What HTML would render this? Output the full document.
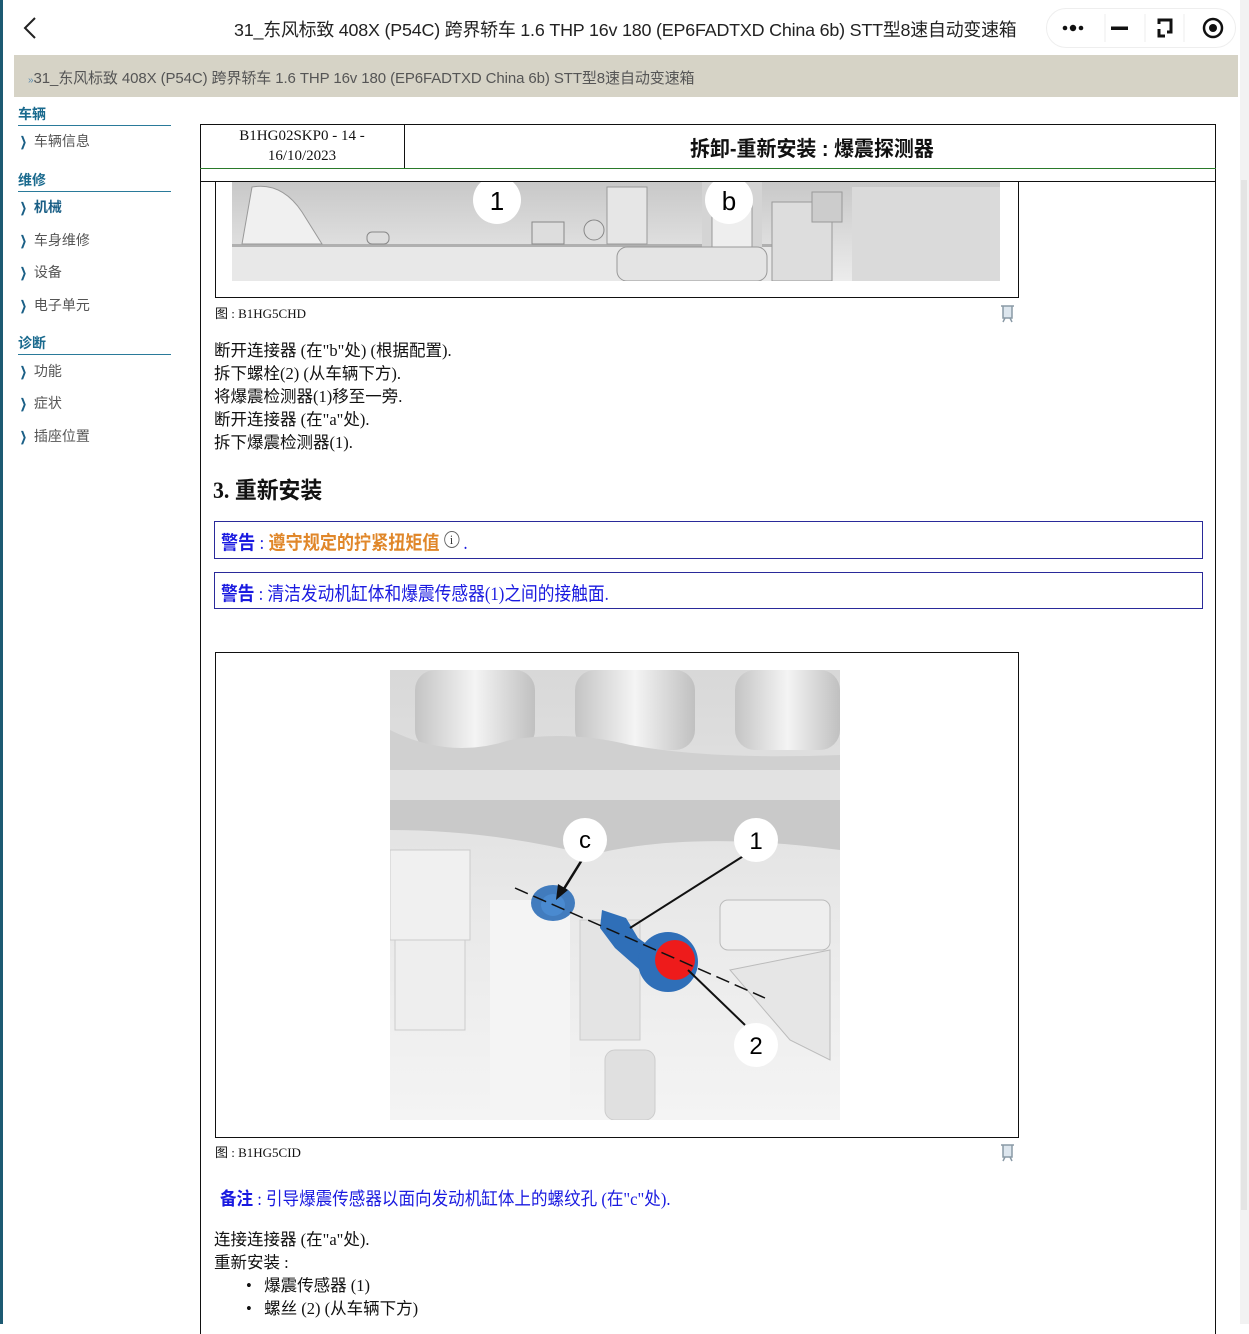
<!DOCTYPE html>
<html><head><meta charset="utf-8">
<style>
*{margin:0;padding:0;box-sizing:border-box}
body{width:1249px;height:1324px;overflow:hidden;background:#fff;position:relative;font-family:"Liberation Serif","Noto Sans CJK SC",serif;color:#111}
.a{position:absolute}
.c{position:absolute;white-space:nowrap;transform-origin:left top}
.s{font-family:"Liberation Sans","Noto Sans CJK SC",sans-serif}
.side div{position:absolute;left:18px;font-family:"Liberation Sans","Noto Sans CJK SC",sans-serif;white-space:nowrap}
.h{color:#1a6a8e;font-weight:bold;font-size:14px;width:153px;border-bottom:1.5px solid #2a7a9a;padding-bottom:1px}
.it{font-size:14px;color:#555}
.it b{color:#1a5f86;font-size:13px;margin-right:5px;display:inline-block;transform:scaleX(.6)}
.txt{font-size:16.5px;line-height:23px}
</style></head><body>
<div class="a" style="left:0;top:0;width:3px;height:1324px;background:#1d5a72"></div>
<div class="a" style="left:1240px;top:0;width:9px;height:1324px;background:#f2f2f2"></div>
<div class="a" style="left:1241px;top:180px;width:6px;height:1030px;background:#e4e4e4"></div>
<svg class="a" style="left:20px;top:16px" width="20" height="24"><path d="M15 2 L5 12 L15 22" stroke="#222" stroke-width="2" fill="none"/></svg>
<div class="a s" style="left:234px;top:16px;font-size:17.9px;color:#222;white-space:nowrap;letter-spacing:-.2px">31_东风标致 408X (P54C) 跨界轿车 1.6 THP 16v 180 (EP6FADTXD China 6b) STT型8速自动变速箱</div>
<div class="a" style="left:1046px;top:8px;width:190px;height:40px;border:1px solid #eee;border-radius:20px;background:#fff"></div>
<svg class="a" style="left:1046px;top:8px" width="190" height="40">
<circle cx="19" cy="20" r="2.3" fill="#111"/><circle cx="27" cy="20" r="3.2" fill="#111"/><circle cx="35" cy="20" r="2.3" fill="#111"/>
<line x1="59" y1="6" x2="59" y2="34" stroke="#eee"/>
<rect x="65" y="18.5" width="17" height="3.5" fill="#111"/>
<line x1="99" y1="6" x2="99" y2="34" stroke="#eee"/>
<path d="M113 16 V12 H125 V24 H121 M113 21 V28 H119" stroke="#111" stroke-width="3" fill="none"/>
<line x1="138" y1="6" x2="138" y2="34" stroke="#eee"/>
<circle cx="167" cy="20" r="9" stroke="#111" stroke-width="2.5" fill="none"/><circle cx="167" cy="20" r="4" fill="#111"/>
</svg>
<div class="a" style="left:14px;top:55px;width:1224px;height:42px;background:#d6d3c6"></div>
<div class="a s" style="left:28px;top:67px;font-size:15px;color:#555;white-space:nowrap;letter-spacing:-.1px"><span style="font-size:10px;color:#5a8cb0">»</span>31_东风标致 408X (P54C) 跨界轿车 1.6 THP 16v 180 (EP6FADTXD China 6b) STT型8速自动变速箱</div>
<div class="side">
<div class="h" style="top:104px">车辆</div>
<div class="it" style="top:131px"><b>❯</b>车辆信息</div>
<div class="h" style="top:170px">维修</div>
<div class="it" style="top:197px;color:#1a5f86;font-weight:bold"><b>❯</b>机械</div>
<div class="it" style="top:230px"><b>❯</b>车身维修</div>
<div class="it" style="top:262px"><b>❯</b>设备</div>
<div class="it" style="top:295px"><b>❯</b>电子单元</div>
<div class="h" style="top:333px">诊断</div>
<div class="it" style="top:361px"><b>❯</b>功能</div>
<div class="it" style="top:393px"><b>❯</b>症状</div>
<div class="it" style="top:426px"><b>❯</b>插座位置</div>
</div>
<div class="a" style="left:200px;top:124px;width:1016px;height:1210px;border-left:1px solid #111;border-right:1px solid #111"></div>
<div class="a" style="left:200px;top:124px;width:1016px;height:1px;background:#111"></div>
<div class="a" style="left:404px;top:124px;width:1px;height:44px;background:#111"></div>
<div class="a" style="left:200px;top:168px;width:1016px;height:1px;background:#2a7a2a"></div>
<div class="a" style="left:200px;top:181px;width:1016px;height:1px;background:#111"></div>
<div class="a" style="left:200px;top:126px;width:204px;text-align:center;font-size:15px;line-height:20px">B1HG02SKP0 - 14 -<br>16/10/2023</div>
<div class="c" style="left:690px;top:133px;font-size:21px;font-weight:bold;font-family:'Liberation Sans','Noto Sans CJK SC',sans-serif;transform:scaleX(.95)">拆卸-重新安装 : 爆震探测器</div>
<div class="a" style="left:215px;top:181px;width:804px;height:117px;border:1px solid #111;border-top:none"></div>
<svg class="a" style="left:232px;top:182px" width="768" height="99">
<defs><linearGradient id="g1" x1="0" y1="0" x2="0" y2="1"><stop offset="0" stop-color="#c8c8c8"/><stop offset="1" stop-color="#ececec"/></linearGradient></defs>
<rect width="768" height="99" fill="url(#g1)"/>
<rect x="0" y="62" width="560" height="37" fill="#e8e8e8"/>
<rect x="0" y="62" width="560" height="3" fill="#b0b0b0"/>
<path d="M20 5 Q50 0 70 30 L90 62 H10 Z" fill="#f0f0f0" stroke="#999"/>
<rect x="135" y="50" width="22" height="12" rx="5" fill="#ddd" stroke="#888"/>
<rect x="300" y="40" width="32" height="22" fill="#ddd" stroke="#888"/>
<circle cx="362" cy="48" r="10" fill="#ddd" stroke="#888"/>
<rect x="375" y="5" width="40" height="57" fill="#e6e6e6" stroke="#999"/>
<rect x="470" y="0" width="60" height="99" fill="#d4d4d4"/>
<rect x="480" y="15" width="40" height="84" fill="#eee" stroke="#999"/>
<rect x="540" y="20" width="60" height="79" fill="#ddd" stroke="#999"/>
<rect x="580" y="10" width="30" height="30" fill="#ccc" stroke="#999"/>
<rect x="620" y="5" width="148" height="94" fill="#dadada"/>
<rect x="385" y="65" width="150" height="34" rx="10" fill="#e4e4e4" stroke="#999"/>
<circle cx="265" cy="18" r="24" fill="#fff"/><text x="265" y="28" font-family="Liberation Sans" font-size="26" text-anchor="middle">1</text>
<circle cx="497" cy="18" r="24" fill="#fff"/><text x="497" y="28" font-family="Liberation Sans" font-size="26" text-anchor="middle">b</text>
</svg>
<div class="c" style="left:215px;top:303px;font-size:13px">图 : B1HG5CHD</div>
<svg class="a" style="left:999px;top:303px" width="17" height="20"><path d="M2 3 H15 M4 3 V15 H13 V3 M6 15 L4 19 M11 15 L13 19" stroke="#8a9aa6" stroke-width="1.5" fill="#dde6ee"/></svg>
<div class="c txt" style="left:214px;top:339px">断开连接器 (在"b"处) (根据配置).<br>拆下螺栓(2) (从车辆下方).<br>将爆震检测器(1)移至一旁.<br>断开连接器 (在"a"处).<br>拆下爆震检测器(1).</div>
<div class="c" style="left:213px;top:471px;font-size:23px;font-weight:bold;transform:scaleX(.95)">3. 重新安装</div>
<div class="a" style="left:214px;top:521px;width:989px;height:38px;border:1.5px solid #2a2a9a"></div>
<div class="c" style="left:221px;top:528px;font-size:19px;color:#1a1ae0;transform:scaleX(.9)"><b>警告</b> : <b style="color:#e0872a">遵守规定的拧紧扭矩值</b> <span style="display:inline-block;width:17px;height:17px;border:1.5px solid #666;border-radius:50%;font-size:13px;text-align:center;line-height:15px;color:#333;vertical-align:5px;font-family:'Liberation Serif'">i</span> .</div>
<div class="a" style="left:214px;top:572px;width:989px;height:37px;border:1.5px solid #2a2a9a"></div>
<div class="c" style="left:221px;top:579px;font-size:19px;color:#1a1ae0;transform:scaleX(.88)"><b>警告</b> : 清洁发动机缸体和爆震传感器(1)之间的接触面.</div>
<div class="a" style="left:215px;top:652px;width:804px;height:486px;border:1px solid #111"></div>
<svg class="a" style="left:390px;top:670px" width="450" height="450">
<defs><linearGradient id="g2" x1="0" y1="0" x2="0" y2="1"><stop offset="0" stop-color="#d8d8d8"/><stop offset=".5" stop-color="#e8e8e8"/><stop offset="1" stop-color="#f4f4f4"/></linearGradient>
<linearGradient id="g3" x1="0" y1="0" x2="1" y2="0"><stop offset="0" stop-color="#c4c4c4"/><stop offset=".5" stop-color="#f4f4f4"/><stop offset="1" stop-color="#c0c0c0"/></linearGradient></defs>
<rect width="450" height="450" fill="url(#g2)"/>
<rect x="25" y="0" width="120" height="80" rx="20" fill="url(#g3)"/>
<rect x="185" y="0" width="120" height="80" rx="20" fill="url(#g3)"/>
<rect x="345" y="0" width="105" height="80" rx="20" fill="url(#g3)"/>
<path d="M0 60 Q60 90 120 70 Q180 60 240 75 Q320 90 450 85 V135 H0 Z" fill="#d0d0d0"/>
<path d="M0 100 H450 V130 H0 Z" fill="#e2e2e2"/>
<path d="M0 130 L450 130 L450 180 Q300 160 200 185 Q100 160 0 160 Z" fill="#c9c9c9"/>
<rect x="0" y="180" width="80" height="90" fill="#f0f0f0" stroke="#ccc"/>
<rect x="5" y="270" width="70" height="90" fill="#eee" stroke="#ccc"/>
<rect x="100" y="230" width="80" height="220" fill="#f4f4f4"/>
<rect x="190" y="250" width="60" height="120" fill="#e4e4e4" stroke="#ccc"/>
<rect x="330" y="230" width="110" height="50" rx="8" fill="#eee" stroke="#bbb"/>
<path d="M340 300 L440 280 V390 L400 370 Z" fill="#e6e6e6" stroke="#bbb"/>
<rect x="215" y="380" width="50" height="70" rx="10" fill="#e0e0e0" stroke="#ccc"/>
<ellipse cx="163" cy="233" rx="22" ry="18" fill="#2f6fb8" opacity=".9"/>
<ellipse cx="163" cy="235" rx="12" ry="11" fill="#4a8ad0"/>
<path d="M212 240 L236 248 L248 268 L265 280 L250 300 L225 278 L210 258 Z" fill="#2f6fb8"/>
<circle cx="278" cy="292" r="30" fill="#2f6fb8"/>
<circle cx="285" cy="290" r="20" fill="#ee1b1b"/>
<line x1="125" y1="218" x2="375" y2="328" stroke="#111" stroke-width="1.5" stroke-dasharray="14 6"/>
<line x1="195" y1="185" x2="172" y2="222" stroke="#111" stroke-width="2.5"/><path d="M166 230 L168 214 L178 220 Z" fill="#111"/>
<line x1="355" y1="185" x2="240" y2="258" stroke="#111" stroke-width="2"/>
<line x1="355" y1="355" x2="298" y2="300" stroke="#111" stroke-width="2"/>
<circle cx="195" cy="170" r="22" fill="#fff"/><text x="195" y="178" font-family="Liberation Sans" font-size="24" text-anchor="middle">c</text>
<circle cx="366" cy="170" r="22" fill="#fff"/><text x="366" y="179" font-family="Liberation Sans" font-size="24" text-anchor="middle">1</text>
<circle cx="366" cy="375" r="22" fill="#fff"/><text x="366" y="384" font-family="Liberation Sans" font-size="24" text-anchor="middle">2</text>
</svg>
<div class="c" style="left:215px;top:1142px;font-size:13px">图 : B1HG5CID</div>
<svg class="a" style="left:999px;top:1142px" width="17" height="20"><path d="M2 3 H15 M4 3 V15 H13 V3 M6 15 L4 19 M11 15 L13 19" stroke="#8a9aa6" stroke-width="1.5" fill="#dde6ee"/></svg>
<div class="c" style="left:220px;top:1185px;font-size:18px;color:#1a1ae0;transform:scaleX(.92)"><b>备注</b> : 引导爆震传感器以面向发动机缸体上的螺纹孔 (在"c"处).</div>
<div class="c txt" style="left:214px;top:1228px">连接连接器 (在"a"处).<br>重新安装 :</div>
<div class="c txt" style="left:246px;top:1274px">•&nbsp;&nbsp;&nbsp;爆震传感器 (1)<br>•&nbsp;&nbsp;&nbsp;螺丝 (2) (从车辆下方)</div>
</body></html>
